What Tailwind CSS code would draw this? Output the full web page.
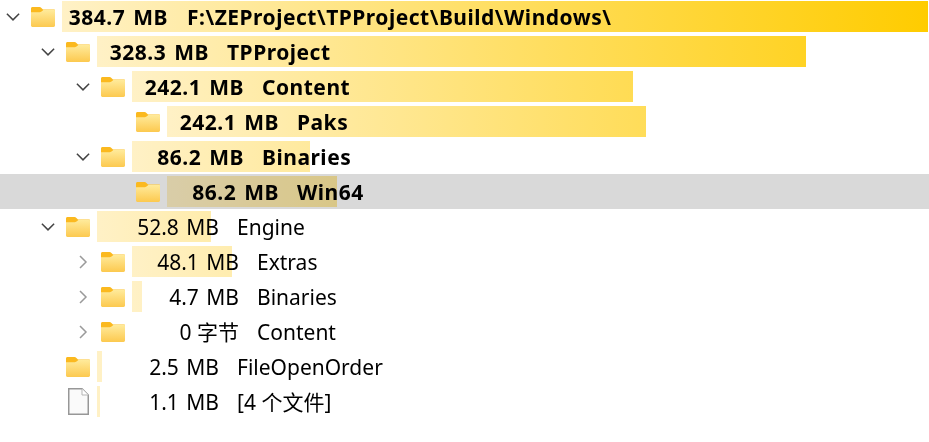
<!DOCTYPE html>
<html lang="zh">
<head>
  <meta charset="UTF-8">
  <title>Folder sizes</title>
  <script src="https://cdn.jsdelivr.net/npm/@tailwindcss/browser@4"></script>
</head>
<body class="bg-white text-black overflow-hidden font-['Noto_Sans','Noto_Sans_CJK_SC',sans-serif] text-[21px] leading-[33px]">
  <svg class="absolute w-0 h-0">
    <defs>
      <linearGradient id="fg" x1="0" y1="0" x2="0" y2="1"><stop offset="0" stop-color="#ffeb9c"/><stop offset="1" stop-color="#fcc94f"/></linearGradient>
      <symbol id="folder" viewBox="0 0 24 20">
        <path d="M1.5 0H8.5C9.3 0 9.8.3 10.4.9L12 2.6H23C23.6 2.6 24 3 24 3.6V6H0V1.5C0 .6.6 0 1.5 0Z" fill="#fbb91f"/>
        <path d="M0 5.2H8.8C9.8 5.2 10.5 4.8 11.2 4.1L12.6 2.7H23C23.6 2.7 24 3.1 24 3.7V18.6C24 19.4 23.4 20 22.6 20H1.4C.6 20 0 19.4 0 18.6Z" fill="url(#fg)"/>
      </symbol>
      <symbol id="down" viewBox="0 0 14 14"><path d="M.9 3.8 7 9.9 13.1 3.8" fill="none" stroke="#444" stroke-width="1.5"/></symbol>
      <symbol id="right" viewBox="0 0 14 14"><path d="M4 1 10 7 4 13" fill="none" stroke="#9a9a9a" stroke-width="1.5"/></symbol>
    </defs>
  </svg>

  <div class="-mt-px">
    <!-- 384.7 MB -->
    <div class="flex items-center h-[35px] font-bold tracking-[0.5px]">
      <div class="w-[31px] pl-[6px] shrink-0"><svg class="w-[14px] h-[14px]"><use href="#down"/></svg></div>
      <svg class="w-[24px] h-[20px] shrink-0"><use href="#folder"/></svg>
      <div class="ml-[7px] w-[866px] h-[31px] flex whitespace-nowrap bg-no-repeat bg-[size:866px_100%] bg-[linear-gradient(to_right,#fff1c6,#ffcc00)]">
        <span class="w-[106px] shrink-0 text-right [word-spacing:2px]">384.7 MB</span><span class="ml-[19px]">F:\ZEProject\TPProject\Build\Windows\</span>
      </div>
    </div>
    <!-- 328.3 MB -->
    <div class="flex items-center h-[35px] font-bold tracking-[0.5px] pl-[35px]">
      <div class="w-[31px] pl-[6px] shrink-0"><svg class="w-[14px] h-[14px]"><use href="#down"/></svg></div>
      <svg class="w-[24px] h-[20px] shrink-0"><use href="#folder"/></svg>
      <div class="ml-[7px] w-[709px] h-[31px] flex whitespace-nowrap bg-no-repeat bg-[size:866px_100%] bg-[linear-gradient(to_right,#fff1c6,#ffcc00)]">
        <span class="w-[112px] shrink-0 text-right [word-spacing:2px]">328.3 MB</span><span class="ml-[18px]">TPProject</span>
      </div>
    </div>
    <!-- 242.1 MB -->
    <div class="flex items-center h-[35px] font-bold tracking-[0.5px] pl-[70px]">
      <div class="w-[31px] pl-[6px] shrink-0"><svg class="w-[14px] h-[14px]"><use href="#down"/></svg></div>
      <svg class="w-[24px] h-[20px] shrink-0"><use href="#folder"/></svg>
      <div class="ml-[7px] w-[501px] h-[31px] flex whitespace-nowrap bg-no-repeat bg-[size:866px_100%] bg-[linear-gradient(to_right,#fff1c6,#ffcc00)]">
        <span class="w-[112px] shrink-0 text-right [word-spacing:2px]">242.1 MB</span><span class="ml-[18px]">Content</span>
      </div>
    </div>
    <!-- Paks -->
    <div class="flex items-center h-[35px] font-bold tracking-[0.5px] pl-[105px]">
      <div class="w-[31px] shrink-0"></div>
      <svg class="w-[24px] h-[20px] shrink-0"><use href="#folder"/></svg>
      <div class="ml-[7px] w-[479px] h-[31px] flex whitespace-nowrap bg-no-repeat bg-[size:866px_100%] bg-[linear-gradient(to_right,#fff1c6,#ffcc00)]">
        <span class="w-[112px] shrink-0 text-right [word-spacing:2px]">242.1 MB</span><span class="ml-[18px]">Paks</span>
      </div>
    </div>
    <!-- Binaries -->
    <div class="flex items-center h-[35px] font-bold tracking-[0.5px] pl-[70px]">
      <div class="w-[31px] pl-[6px] shrink-0"><svg class="w-[14px] h-[14px]"><use href="#down"/></svg></div>
      <svg class="w-[24px] h-[20px] shrink-0"><use href="#folder"/></svg>
      <div class="ml-[7px] w-[178px] h-[31px] flex whitespace-nowrap bg-no-repeat bg-[size:866px_100%] bg-[linear-gradient(to_right,#fff1c6,#ffcc00)]">
        <span class="w-[112px] shrink-0 text-right [word-spacing:2px]">86.2 MB</span><span class="ml-[18px]">Binaries</span>
      </div>
    </div>
    <!-- Win64, selected -->
    <div class="flex items-center h-[35px] font-bold tracking-[0.5px] pl-[105px] bg-[#d9d9d9]">
      <div class="w-[31px] shrink-0"></div>
      <svg class="w-[24px] h-[20px] shrink-0"><use href="#folder"/></svg>
      <div class="ml-[7px] w-[170px] h-[31px] flex whitespace-nowrap mix-blend-multiply bg-no-repeat bg-[size:866px_100%] bg-[linear-gradient(to_right,#fff1c6,#ffcc00)]">
        <span class="w-[112px] shrink-0 text-right [word-spacing:2px]">86.2 MB</span><span class="ml-[18px]">Win64</span>
      </div>
    </div>
    <!-- Engine -->
    <div class="flex items-center h-[35px] pl-[35px]">
      <div class="w-[31px] pl-[6px] shrink-0"><svg class="w-[14px] h-[14px]"><use href="#down"/></svg></div>
      <svg class="w-[24px] h-[20px] shrink-0"><use href="#folder"/></svg>
      <div class="ml-[7px] w-[114px] h-[31px] flex whitespace-nowrap bg-no-repeat bg-[size:866px_100%] bg-[linear-gradient(to_right,#fff1c6,#ffcc00)]">
        <span class="w-[122px] shrink-0 text-right [word-spacing:2px]">52.8 MB</span><span class="ml-[18px]">Engine</span>
      </div>
    </div>
    <!-- Extras -->
    <div class="flex items-center h-[35px] pl-[70px]">
      <div class="w-[31px] pl-[6px] shrink-0"><svg class="w-[14px] h-[14px]"><use href="#right"/></svg></div>
      <svg class="w-[24px] h-[20px] shrink-0"><use href="#folder"/></svg>
      <div class="ml-[7px] w-[100px] h-[31px] flex whitespace-nowrap bg-no-repeat bg-[size:866px_100%] bg-[linear-gradient(to_right,#fff1c6,#ffcc00)]">
        <span class="w-[107px] shrink-0 text-right [word-spacing:2px]">48.1 MB</span><span class="ml-[18px]">Extras</span>
      </div>
    </div>
    <!-- Binaries -->
    <div class="flex items-center h-[35px] pl-[70px]">
      <div class="w-[31px] pl-[6px] shrink-0"><svg class="w-[14px] h-[14px]"><use href="#right"/></svg></div>
      <svg class="w-[24px] h-[20px] shrink-0"><use href="#folder"/></svg>
      <div class="ml-[7px] w-[10px] h-[31px] flex whitespace-nowrap bg-no-repeat bg-[size:866px_100%] bg-[linear-gradient(to_right,#fff1c6,#ffcc00)]">
        <span class="w-[107px] shrink-0 text-right [word-spacing:2px]">4.7 MB</span><span class="ml-[18px]">Binaries</span>
      </div>
    </div>
    <!-- Content -->
    <div class="flex items-center h-[35px] pl-[70px]">
      <div class="w-[31px] pl-[6px] shrink-0"><svg class="w-[14px] h-[14px]"><use href="#right"/></svg></div>
      <svg class="w-[24px] h-[20px] shrink-0"><use href="#folder"/></svg>
      <div class="ml-[7px] w-0 h-[31px] flex whitespace-nowrap">
        <span class="w-[107px] shrink-0 text-right">0 字节</span><span class="ml-[18px]">Content</span>
      </div>
    </div>
    <!-- FileOpenOrder -->
    <div class="flex items-center h-[35px] pl-[35px]">
      <div class="w-[31px] shrink-0"></div>
      <svg class="w-[24px] h-[20px] shrink-0"><use href="#folder"/></svg>
      <div class="ml-[7px] w-[5px] h-[31px] flex whitespace-nowrap bg-no-repeat bg-[size:866px_100%] bg-[linear-gradient(to_right,#fff1c6,#ffcc00)]">
        <span class="w-[122px] shrink-0 text-right [word-spacing:2px]">2.5 MB</span><span class="ml-[18px]">FileOpenOrder</span>
      </div>
    </div>
    <!-- files -->
    <div class="flex items-center h-[35px] pl-[35px]">
      <div class="w-[33px] shrink-0"></div>
      <svg class="w-[21px] h-[27px] shrink-0" viewBox="0 0 21 27">
        <path d="M.75.75H14L20.25 7V26.25H.75Z" fill="#fafafa" stroke="#979797" stroke-width="1.5"/>
        <path d="M14 .75V7H20.25" fill="#fff" stroke="#b5b5b5" stroke-width="1"/>
      </svg>
      <div class="ml-[8px] w-[3px] h-[31px] flex whitespace-nowrap bg-no-repeat bg-[size:866px_100%] bg-[linear-gradient(to_right,#fff1c6,#ffcc00)]">
        <span class="w-[122px] shrink-0 text-right [word-spacing:2px]">1.1 MB</span><span class="ml-[18px]">[4 个文件]</span>
      </div>
    </div>
  </div>
</body>
</html>
